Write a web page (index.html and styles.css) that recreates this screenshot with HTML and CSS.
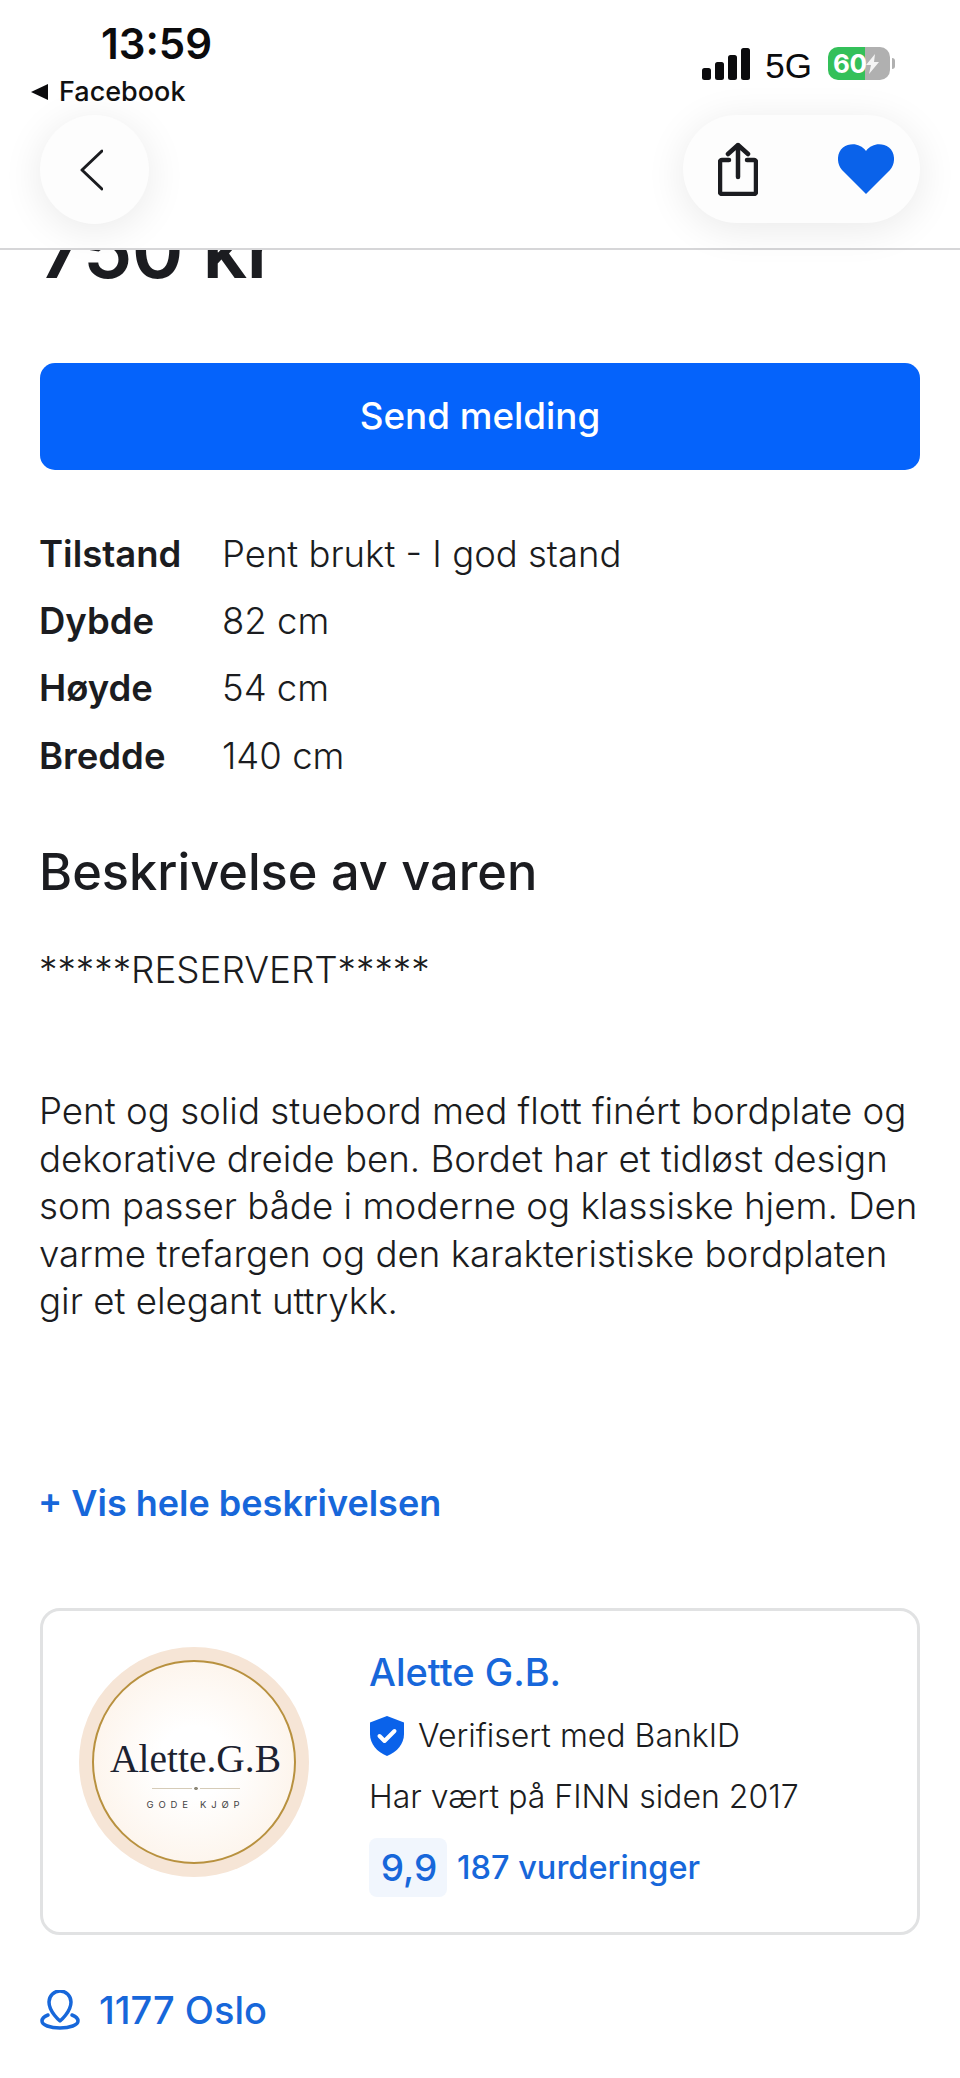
FILE: index.html
```html
<!DOCTYPE html>
<html lang="no">
<head>
<meta charset="utf-8">
<title>Stuebord</title>
<link rel="stylesheet" href="styles.css">
</head>
<body>
<header class="topbar">
  <div class="status">
    <div class="status-left">
      <div class="time">13:59</div>
      <div class="backapp"><svg class="backapp-arrow" viewBox="0 0 18 16"><path d="M17 0v16L0 8z"/></svg>Facebook</div>
    </div>
    <div class="status-right">
      <svg class="signal" viewBox="0 0 48 32"><rect x="0" y="20" width="9" height="12" rx="2.5"/><rect x="13" y="14" width="9" height="18" rx="2.5"/><rect x="26" y="7" width="9" height="25" rx="2.5"/><rect x="39" y="0" width="9" height="32" rx="2.5"/></svg>
      <span class="net">5G</span>
      <div class="battery"><span class="battery-num">60</span><svg class="bolt" viewBox="0 0 14 20"><path d="M9 0 0 11h5l-2 9 10-12H8z"/></svg></div>
      <div class="battery-tip"></div>
    </div>
  </div>
  <div class="nav">
    <button class="round-btn" aria-label="Tilbake"><svg class="chev" viewBox="0 0 24 42"><path d="M23 2 3 21l20 19"/></svg></button>
    <div class="pill">
      <svg class="share" viewBox="0 0 40 54"><path d="M11 18H4a2 2 0 0 0-2 2v30a2 2 0 0 0 2 2h32a2 2 0 0 0 2-2V20a2 2 0 0 0-2-2h-7"/><path d="M20 35V3M10 12l10-9 10 9"/></svg>
      <svg class="heart" viewBox="0 0 56 50"><path d="M28 50 4 26C-2 19-1 8 5 3.500 12-1.500 22-1 28 7 34-1 44-1.500 51 3.500c6 4.500 7 15.500 1 22.500z"/></svg>
    </div>
  </div>
</header>

<main class="page">
  <div class="price">750 kr</div>
  <button class="cta">Send melding</button>

  <dl class="specs">
    <dt>Tilstand</dt><dd>Pent brukt - I god stand</dd>
    <dt>Dybde</dt><dd>82 cm</dd>
    <dt>Høyde</dt><dd>54 cm</dd>
    <dt>Bredde</dt><dd>140 cm</dd>
  </dl>

  <h2 class="title">Beskrivelse av varen</h2>
  <p class="reserved">*****RESERVERT*****</p>
  <p class="desc">Pent og solid stuebord med flott finért bordplate og dekorative dreide ben. Bordet har et tidløst design som passer både i moderne og klassiske hjem. Den varme trefargen og den karakteristiske bordplaten gir et elegant uttrykk.</p>
  <a class="more">+ Vis hele beskrivelsen</a>

  <section class="seller">
    <div class="avatar">
      <div class="avatar-ring">
        <span class="avatar-name">Alette.G.B</span>
        <span class="avatar-rule"></span>
        <span class="avatar-sub">GODE KJØP</span>
      </div>
    </div>
    <div class="seller-info">
      <a class="seller-name">Alette G.B.</a>
      <div class="verified"><svg class="shield" viewBox="0 0 36 40"><path d="M18 0 35 6.500V18c0 10-7 18-17 22C8 36 1 28 1 18V6.500z"/><path class="tick" d="M10.500 20l5 5 10-10"/></svg>Verifisert med BankID</div>
      <div class="since">Har vært på FINN siden 2017</div>
      <div class="rating"><span class="score">9,9</span><a class="reviews">187 vurderinger</a></div>
    </div>
  </section>

  <a class="place"><svg class="pin" viewBox="0 0 40 40"><path d="M20 31s-11-9-11-19a11 11 0 0 1 22 0c0 10-11 19-11 19z"/><path d="M8 25c-4 1.500-6 3.500-6 6 0 4 8 7 18 7s18-3 18-7c0-2.500-2-4.500-6-6"/></svg>1177 Oslo</a>
</main>
</body>
</html>
```

FILE: styles.css
```css
* { box-sizing: border-box; }
html, body { margin: 0; padding: 0; }
body {
  width: 960px;
  height: 2078px;
  overflow: hidden;
  position: relative;
  background: #fff;
  color: #1b1c20;
  font-family: Inter, "Liberation Sans", sans-serif;
}
.topbar {
  position: absolute;
  top: 0; left: 0; right: 0;
  height: 250px;
  background: #fff;
  border-bottom: 2px solid #d6d6d8;
  padding: 0 40px;
  z-index: 2;
}
.status { display: flex; justify-content: space-between; height: 115px; }
.status-left { margin-left: -9px; }
.time { font-size: 42px; font-weight: 600; color: #0b0b0d; line-height: 50px; margin: 19px 0 0 70px; }
.backapp { display: flex; align-items: center; gap: 10px; font-size: 27px; font-weight: 500; color: #111; line-height: 36px; margin-top: 5px; }
.backapp-arrow { width: 18px; height: 16px; fill: #0b0b0d; }
.status-right { display: flex; align-items: flex-start; margin: 47px 25px 0 0; }
.signal { width: 48px; height: 32px; fill: #0b0b0d; margin-top: 1px; }
.net { font-size: 35px; line-height: 32px; font-weight: 400; color: #0b0b0d; margin: 3px 16px 0 15px; font-family: "Liberation Sans", sans-serif; }
.battery {
  width: 62px; height: 33px; border-radius: 10px;
  background: linear-gradient(90deg, #34c05a 0 60%, #b0b0b0 60% 100%);
  display: flex; align-items: center; color: #fff; padding-left: 5px; gap: 0;
}
.battery-num { font-size: 26px; font-weight: 700; line-height: 33px; letter-spacing: -.5px; }
.bolt { width: 14px; height: 20px; fill: #f4f4f4; margin-left: 0; }
.battery-tip { width: 3px; height: 11px; background: #b0b0b0; border-radius: 0 3px 3px 0; margin: 11px 0 0 2px; }

.nav { display: flex; justify-content: space-between; }
.round-btn {
  width: 109px; height: 109px; border: 0; border-radius: 50%; background: #fdfdfd; padding: 0;
  display: flex; align-items: center; justify-content: center;
  box-shadow: 0 6px 40px rgba(0,0,0,.09);
}
.chev { width: 24px; height: 42px; fill: none; stroke: #1b1c20; stroke-width: 3; stroke-linecap: round; stroke-linejoin: round; margin-right: 7px; }
.pill {
  width: 237px; height: 108px; border-radius: 54px; background: #fdfdfd;
  display: flex; align-items: center; gap: 80px; padding-left: 35px;
  box-shadow: 0 6px 40px rgba(0,0,0,.09);
}
.share { width: 40px; height: 54px; fill: none; stroke: #1b1c20; stroke-width: 4.500; stroke-linecap: round; stroke-linejoin: round; }
.heart { width: 56px; height: 50px; fill: #0a62ea; }

.page { padding: 0 39px 0 40px; }
.price { font-size: 78.500px; font-weight: 600; line-height: 88px; padding-top: 206px; height: 297px; letter-spacing: -.5px; margin-left: -1px; }
.cta {
  display: block; width: 880px; height: 107px; margin-top: 66px;
  border: 0; border-radius: 15px; background: #0563fb; color: #fff;
  font: 500 36.800px/1 Inter, "Liberation Sans", sans-serif;
  padding-bottom: 1px;
}
.specs {
  display: grid; grid-template-columns: 183px 1fr; grid-auto-rows: 67.300px;
  align-items: center; margin: 50px 0 0 -1px; font-size: 36.500px;
}
.specs dt { font-weight: 600; }
.specs dd { margin: 0; font-weight: 300; }
.title { font-size: 50.500px; font-weight: 500; line-height: 60px; margin: 53px 0 0 -1px; }
.reserved { font-size: 36.800px; font-weight: 300; line-height: 48px; margin: 44px 0 0 -1px; }
.desc { font-size: 36.700px; font-weight: 300; line-height: 47.500px; margin: 93px 0 0 -1px; }
.more { display: block; font-size: 36px; font-weight: 600; color: #1767da; line-height: 48px; margin: 154px 0 0 -2px; }
.seller {
  display: flex; width: 880px; height: 327px; margin-top: 81px; padding: 36px 36px;
  border: 3px solid #e1e2e3; border-radius: 20px;
}
.avatar {
  width: 230px; height: 230px; border-radius: 50%; background: #f6e5d6; padding: 13px; flex: none;
}
.avatar-ring {
  width: 100%; height: 100%; border-radius: 50%; border: 2px solid #b8913f;
  background: radial-gradient(circle, #fff 25%, #fcefe2 100%);
  display: flex; flex-direction: column; align-items: center; padding: 74px 0 0 3px;
}
.avatar-name { font-family: "Liberation Serif", serif; font-size: 39.500px; line-height: 46px; color: #1c2230; }
.avatar-rule {
  width: 88px; height: 3px; margin-top: 5px;
  background:
    radial-gradient(circle, #8f8a7a 0 1.5px, #fff 2px 4px, transparent 4.500px) center / 10px 3px no-repeat,
    linear-gradient(#d6ccb8, #d6ccb8) center / 100% 1px no-repeat;
}
.avatar-sub { font-size: 9.500px; letter-spacing: 4.800px; color: #444; margin-top: 9px; line-height: 12px; }
.seller-info { margin-left: 61px; display: flex; flex-direction: column; align-items: flex-start; padding-top: 3px; }
.seller-name { font-size: 38px; font-weight: 500; color: #1767da; line-height: 44px; margin-top: 0; margin-left: -1px; }
.verified { display: flex; align-items: center; gap: 13px; font-size: 32px; font-weight: 300; line-height: 44px; margin: 20px 0 0 -1px; }
.shield { width: 36px; height: 40px; fill: #0a62ea; }
.tick { fill: none; stroke: #fff; stroke-width: 4; stroke-linecap: round; stroke-linejoin: round; }
.since { font-size: 32px; font-weight: 300; line-height: 44px; margin: 17px 0 0 -1px; }
.rating { display: flex; align-items: center; gap: 10px; margin: 19px 0 0 -1px; }
.score {
  width: 78px; height: 59px; border-radius: 8px; background: #f1f6fd; color: #1767da;
  font-size: 37px; font-weight: 500; display: flex; align-items: center; justify-content: center; padding-left: 2px;
}
.reviews { font-size: 32.500px; font-weight: 500; color: #1767da; }
.place { display: flex; align-items: center; gap: 19px; font-size: 38px; font-weight: 500; color: #1767da; margin-top: 51px; line-height: 48px; }
.pin { width: 40px; height: 40px; fill: none; stroke: #1767da; stroke-width: 3.500; stroke-linecap: round; stroke-linejoin: round; }
```
